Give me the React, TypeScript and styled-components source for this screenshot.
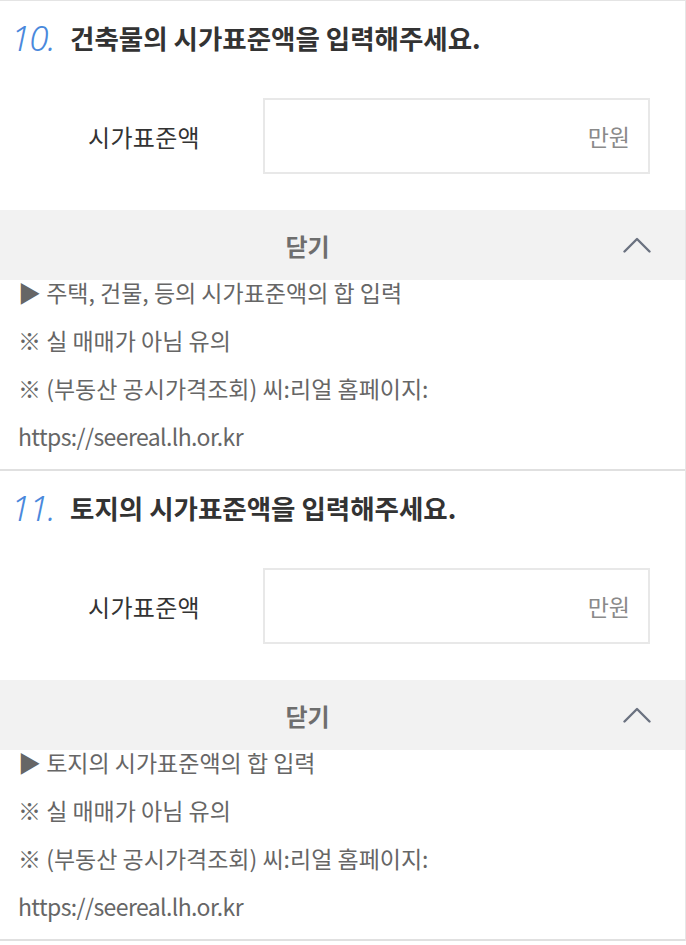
import styled, { createGlobalStyle } from "styled-components";

/* ── GLOBAL ── */

const GlobalStyle = createGlobalStyle`
  html, body {
    margin: 0;
    padding: 0;
    background: #ffffff;
  }

  body {
    font-family: "Noto Sans CJK KR", "Noto Sans", sans-serif;
    color: #333333;
  }
`;

/* ── STYLED COMPONENTS ── */

const Page = styled.div`
  width: 686px;
  box-sizing: border-box;
  border-top: 1px solid #e4e4e4;
  border-right: 1px solid #e6e6e6;
`;

const Section = styled.section`
  border-bottom: 2px solid #e0e0e0;
  padding-bottom: 21px;
`;

const TitleRow = styled.div`
  height: 72px;
  display: flex;
  align-items: center;
  padding-left: 11px;
`;

const Number = styled.span`
  width: 59px;
  flex-shrink: 0;
  font-family: "Noto Sans", "Open Sans", sans-serif;
  font-style: italic;
  font-weight: 300;
  font-size: 35px;
  letter-spacing: -1px;
  color: #4a88dc;
  line-height: 1;
`;

const Title = styled.h2`
  margin: 0;
  font-size: 26.5px;
  font-weight: 700;
  letter-spacing: 0;
  color: #333333;
`;

const FieldRow = styled.div`
  margin-top: 25px;
  display: grid;
  grid-template-columns: 263px 387px;
  align-items: center;
`;

const FieldLabel = styled.label`
  padding-left: 88px;
  font-size: 24px;
  letter-spacing: 0.3px;
  color: #333333;
`;

const InputBox = styled.div`
  height: 76px;
  box-sizing: border-box;
  border: 2px solid #e8e8e8;
  display: flex;
  align-items: center;
  justify-content: flex-end;
  padding-right: 18px;
`;

const Unit = styled.span`
  font-size: 23px;
  color: #8a8a8a;
`;

const ToggleBar = styled.div`
  margin-top: 36px;
  height: 70px;
  background: #f2f2f2;
  display: flex;
  align-items: center;
  gap: 8px;
  padding-right: 34px;
`;

const ToggleText = styled.span`
  flex: 1;
  text-align: center;
  font-size: 24px;
  font-weight: 700;
  color: #6e6e6e;
`;

const Notes = styled.ul`
  list-style: none;
  margin: 0;
  padding: 0 0 0 18px;
  display: flex;
  flex-direction: column;
  gap: 24px;
`;

const Note = styled.li<{ $url?: boolean }>`
  font-size: 23px;
  line-height: 24px;
  letter-spacing: ${(p) => (p.$url ? "-0.6px" : "0")};
  color: #666666;
  white-space: nowrap;
`;

/* ── DATA ── */

const items = [
  {
    no: "10.",
    title: "건축물의 시가표준액을 입력해주세요.",
    notes: [
      "▶ 주택, 건물, 등의 시가표준액의 합 입력",
      "※ 실 매매가 아님 유의",
      "※ (부동산 공시가격조회) 씨:리얼 홈페이지:",
    ],
  },
  {
    no: "11.",
    title: "토지의 시가표준액을 입력해주세요.",
    notes: [
      "▶ 토지의 시가표준액의 합 입력",
      "※ 실 매매가 아님 유의",
      "※ (부동산 공시가격조회) 씨:리얼 홈페이지:",
    ],
  },
];

function ChevronUp() {
  return (
    <svg width="28" height="16" viewBox="0 0 28 16" fill="none">
      <polyline
        points="1.5,14.5 14,2 26.5,14.5"
        stroke="#6b7280"
        strokeWidth="2.4"
        strokeLinecap="round"
        strokeLinejoin="round"
      />
    </svg>
  );
}

/* ── COMPONENT ── */

function App() {
  return (
    <>
      <GlobalStyle />
      <Page>
        {items.map((item) => (
          <Section key={item.no}>
            <TitleRow>
              <Number>{item.no}</Number>
              <Title>{item.title}</Title>
            </TitleRow>

            <FieldRow>
              <FieldLabel>시가표준액</FieldLabel>
              <InputBox>
                <Unit>만원</Unit>
              </InputBox>
            </FieldRow>

            <ToggleBar>
              <ToggleText>닫기</ToggleText>
              <ChevronUp />
            </ToggleBar>

            <Notes>
              {item.notes.map((note, i) => (
                <Note key={i}>{note}</Note>
              ))}
              <Note $url>https://seereal.lh.or.kr</Note>
            </Notes>
          </Section>
        ))}
      </Page>
    </>
  );
}

export default App;
